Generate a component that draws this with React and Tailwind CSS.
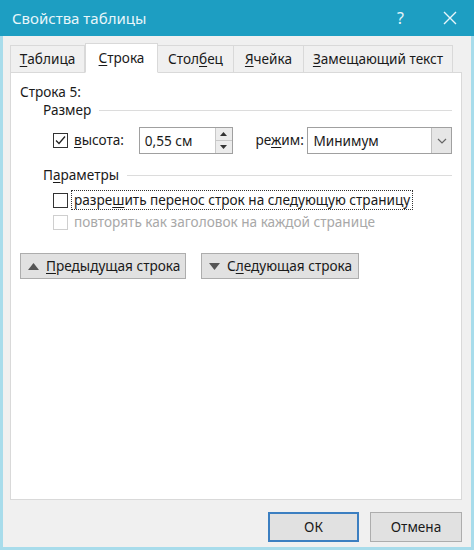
import React from "react";

const font = { fontFamily: '"Noto Sans", "Open Sans", sans-serif' };

const U = ({ children }) => <span className="underline underline-offset-2">{children}</span>;

const Tab = ({ active, w, children }) =>
  active ? (
    <div className={"h-[30px] -mb-px flex items-center justify-center bg-white border border-[#d9d9d9] border-b-white text-[13.6px] text-[#1a1a1a] z-10 whitespace-nowrap " + w}>
      {children}
    </div>
  ) : (
    <div className={"h-[27px] -ml-px flex items-center justify-center bg-[#f0f0f0] border border-[#d9d9d9] border-b-0 text-[13.6px] text-[#1a1a1a] whitespace-nowrap " + w}>
      {children}
    </div>
  );

const Check = ({ checked, disabled }) => (
  <div
    className={
      "w-[15px] h-[15px] shrink-0 border flex items-center justify-center " +
      (disabled ? "border-[#cfcfcf] bg-white" : "border-[#333] bg-white")
    }
  >
    {checked && (
      <svg width="13" height="13" viewBox="0 0 13 13">
        <path d="M2 6.5 L5 9.5 L11 2.5" fill="none" stroke="#222" strokeWidth="1.3" />
      </svg>
    )}
  </div>
);

const GroupTitle = ({ children }) => (
  <div className="flex items-center gap-[8px] ml-[32px] leading-[18px]">
    <span className="text-[#1a1a1a]">{children}</span>
    <div className="flex-1 h-px bg-[#dcdcdc]" />
  </div>
);

const Triangle = ({ up }) => (
  <svg width="11" height="7" viewBox="0 0 11 7">
    <path d={up ? "M0 7 L5.5 0 L11 7 Z" : "M0 0 L5.5 7 L11 0 Z"} fill="#555" />
  </svg>
);

export default function App() {
  return (
    <div style={font} className="w-[474px] h-[550px] bg-[#a8dceb] flex flex-col">
      {/* title bar */}
      <div className="h-[36px] bg-[#1d9ec2] flex items-center pl-[12px] pr-[16px] shrink-0">
        <span className="text-[15px] text-[#e8f6fa] flex-1">Свойства таблицы</span>
        <span className="text-[16px] text-[#e8f6fa] mr-[38px]">?</span>
        <svg width="16" height="16" viewBox="0 0 16 16">
          <path d="M2 2 L14 14 M14 2 L2 14" stroke="#e8f6fa" strokeWidth="1.4" />
        </svg>
      </div>

      {/* body */}
      <div className="flex-1 mx-[3px] mb-[3px] bg-[#f0f0f0] flex flex-col pt-[7px] pl-[7px] pr-[9px]">
        <div className="flex items-end pl-px">
          <Tab w="w-[75px]">
            <U>Т</U>аблица
          </Tab>
          <Tab active w="w-[73px]">
            <U>С</U>трока
          </Tab>
          <Tab w="w-[77px]">
            Стол<U>б</U>ец
          </Tab>
          <Tab w="w-[71px]">
            <U>Я</U>чейка
          </Tab>
          <Tab w="w-[150px]">
            <U>З</U>амещающий текст
          </Tab>
        </div>

        <div className="h-[428px] bg-white border border-[#d9d9d9] pt-[10px] pr-[9px] text-[13.6px] text-[#1a1a1a]">
          <div className="ml-[9px] leading-[18px]">Строка 5:</div>
          <GroupTitle>Размер</GroupTitle>

          <div className="flex items-center mt-[8px] ml-[42px] h-[27px]">
            <Check checked />
            <span className="ml-[6px] w-[65px]">
              <U>в</U>ысота:
            </span>
            <div className="w-[94px] h-[27px] border border-[#a0a0a0] flex">
              <span className="flex-1 pl-[5px] leading-[25px]">0,55 см</span>
              <div className="w-[17px] border-l border-[#c8c8c8] flex flex-col">
                <div className="flex-1 bg-[#ececec] border-b border-[#c8c8c8] flex items-center justify-center">
                  <svg width="7" height="4" viewBox="0 0 7 4"><path d="M0 4 L3.5 0 L7 4 Z" fill="#333" /></svg>
                </div>
                <div className="flex-1 bg-[#ececec] flex items-center justify-center">
                  <svg width="7" height="4" viewBox="0 0 7 4"><path d="M0 0 L3.5 4 L7 0 Z" fill="#333" /></svg>
                </div>
              </div>
            </div>
            <span className="ml-[23px] w-[52px]">
              ре<U>ж</U>им:
            </span>
            <div className="w-[145px] h-[27px] border border-[#a0a0a0] flex">
              <span className="flex-1 pl-[5px] leading-[25px]">Минимум</span>
              <div className="w-[20px] bg-[#e6e6e6] border-l border-[#c0c0c0] flex items-center justify-center">
                <svg width="10" height="6" viewBox="0 0 10 6">
                  <path d="M1 1 L5 5 L9 1" fill="none" stroke="#666" strokeWidth="1.2" />
                </svg>
              </div>
            </div>
          </div>

          <div className="mt-[12px]">
            <GroupTitle>
              П<U>а</U>раметры
            </GroupTitle>
          </div>

          <div className="flex items-center mt-[6px] ml-[42px] h-[20px]">
            <Check />
            <span className="ml-[3px] px-[2px] border border-dotted border-[#333] leading-[18px] whitespace-nowrap">
              разре<U>ш</U>ить перенос строк на следующую страницу
            </span>
          </div>
          <div className="flex items-center mt-[2px] ml-[42px] h-[20px] text-[#a8a8a8]">
            <Check disabled />
            <span className="ml-[6px] whitespace-nowrap">повторять как заголовок на каждой странице</span>
          </div>

          <div className="flex mt-[21px] ml-[9px] gap-[15px] whitespace-nowrap">
            <div className="h-[26px] w-[166px] bg-[#e1e1e1] border border-[#adadad] flex items-center pl-[7px] gap-[7px]">
              <Triangle up />
              <span>
                <U>П</U>редыдущая строка
              </span>
            </div>
            <div className="h-[26px] w-[158px] bg-[#e1e1e1] border border-[#adadad] flex items-center pl-[7px] gap-[7px]">
              <Triangle />
              <span>
                С<U>л</U>едующая строка
              </span>
            </div>
          </div>
        </div>

        <div className="flex justify-end gap-[11px] mt-[12px] text-[13.6px] text-[#1a1a1a]">
          <div className="w-[91px] h-[30px] bg-[#e1e1e1] border-2 border-[#3c7fc1] flex items-center justify-center">
            ОК
          </div>
          <div className="w-[92px] h-[30px] bg-[#e1e1e1] border border-[#adadad] flex items-center justify-center">
            Отмена
          </div>
        </div>
      </div>
    </div>
  );
}
